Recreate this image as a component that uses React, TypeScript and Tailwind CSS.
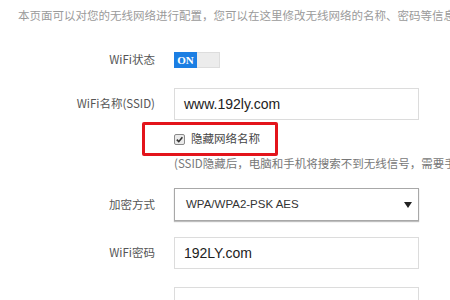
const font = "font-['Microsoft_YaHei','Noto_Sans_CJK_SC',sans-serif]";
const latin = "font-['Liberation_Sans','Noto_Sans_CJK_SC',sans-serif]";

function Label({ children }: { children: React.ReactNode }) {
  return (
    <div className="w-[155px] shrink-0 text-right text-[11.5px] leading-none text-[#555]">
      {children}
    </div>
  );
}

function Field({ value }: { value: string }) {
  return (
    <div
      className={`flex h-[32px] w-[245px] items-center border border-[#dcdcdc] bg-white pl-[9px] text-[14px] text-[#222] ${latin}`}
    >
      {value}
    </div>
  );
}

export default function App() {
  return (
    <div className={`h-[300px] w-[450px] overflow-hidden bg-white ${font}`}>
      <p className="whitespace-nowrap pl-[18px] pt-[7px] text-[11.5px] leading-[16px] text-[#9a9a9a]">
        本页面可以对您的无线网络进行配置，您可以在这里修改无线网络的名称、密码等信息
      </p>

      <div className="mt-[29px] flex flex-col">
        <div className="flex items-center gap-[19px]">
          <Label>WiFi状态</Label>
          <div className="flex h-[16px] w-[46px]">
            <div className="flex w-[23px] items-center justify-center bg-[#1b7ee3] font-['Liberation_Serif',serif] text-[11px] font-bold text-white">
              ON
            </div>
            <div className="flex-1 border border-l-0 border-[#ddd] bg-[#ececec]" />
          </div>
        </div>

        <div className="mt-[20px] flex items-center gap-[19px]">
          <Label>WiFi名称(SSID)</Label>
          <Field value="www.192ly.com" />
        </div>

        <div className="relative mt-[2px] flex h-[34px] items-center pl-[174px]">
          <div className="pointer-events-none absolute left-[142px] top-0 h-[34px] w-[136px] rounded-[2px] border-[3px] border-[#e3141b]" />
          <span className="flex h-[11px] w-[11px] items-center justify-center rounded-[2px] border border-[#8a8a8a] bg-[#eaeaea]">
            <svg viewBox="0 0 10 10" className="h-[9px] w-[9px]">
              <path d="M2 5.2 L4.2 7.4 L8.2 2.6" fill="none" stroke="#333" strokeWidth="1.8" />
            </svg>
          </span>
          <span className="ml-[6px] text-[11.5px] leading-none text-[#444]">隐藏网络名称</span>
        </div>

        <p className="whitespace-nowrap pl-[174px] text-[11.5px] leading-[14px] text-[#777]">
          (SSID隐藏后，电脑和手机将搜索不到无线信号，需要手动输入
        </p>

        <div className="mt-[18px] flex items-center gap-[19px]">
          <Label>加密方式</Label>
          <div
            className={`flex h-[33px] w-[245px] items-center justify-between border border-[#a8a8a8] bg-white pl-[11px] pr-[6px] text-[11.5px] text-[#333] shadow-[0_1px_1px_rgba(0,0,0,0.25)] ${latin}`}
          >
            <span>WPA/WPA2-PSK AES</span>
            <svg viewBox="0 0 8 6" className="h-[6px] w-[8px]">
              <path d="M0 0 H8 L4 6 Z" fill="#222" />
            </svg>
          </div>
        </div>

        <div className="mt-[16px] flex items-center gap-[19px]">
          <Label>WiFi密码</Label>
          <Field value="192LY.com" />
        </div>

        <div className="mt-[18px] flex items-center gap-[19px]">
          <Label>&nbsp;</Label>
          <Field value="" />
        </div>
      </div>
    </div>
  );
}
